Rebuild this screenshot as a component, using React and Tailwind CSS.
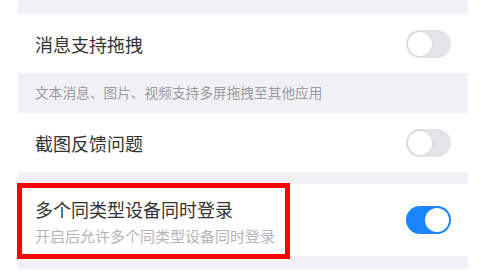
import React from "react";

function Toggle({ on }) {
  return (
    <div
      className={
        "w-[45px] h-[28px] rounded-full p-[2px] flex items-center " +
        (on ? "bg-[#1a84ff] justify-end" : "bg-[#e4e4e8] justify-start")
      }
    >
      <div
        className={
          "w-[24px] h-[24px] rounded-full bg-white " +
          (on ? "" : "shadow-[0_0_0_1px_#d6d6da]")
        }
      />
    </div>
  );
}

export default function App() {
  return (
    <div
      className="w-[500px] h-[280px] bg-white overflow-hidden"
      style={{ fontFamily: '"Noto Sans CJK SC", "Noto Sans", sans-serif' }}
    >
      <div className="ml-[18px] w-[450px] bg-[#f1f1f5] relative">
        {/* top spacer */}
        <div className="h-[14px]" />

        {/* drag messages */}
        <div className="h-[59px] bg-white flex items-center justify-between pl-[17px] pr-[17px]">
          <span className="text-[18px] text-[#333333] leading-none">消息支持拖拽</span>
          <Toggle on={false} />
        </div>
        <div className="h-[40px] flex items-center pl-[17px]">
          <span className="text-[13.7px] text-[#9a9a9e] leading-none">
            文本消息、图片、视频支持多屏拖拽至其他应用
          </span>
        </div>

        {/* screenshot feedback */}
        <div className="h-[59px] bg-white flex items-center justify-between pl-[17px] pr-[17px]">
          <span className="text-[18px] text-[#333333] leading-none">截图反馈问题</span>
          <Toggle on={false} />
        </div>
        <div className="h-[12px]" />

        {/* multi device login */}
        <div className="h-[72px] bg-white flex items-center justify-between pl-[17px] pr-[17px] relative">
          <div className="flex flex-col">
            <span className="text-[18px] text-[#333333] leading-none mt-[2px]">
              多个同类型设备同时登录
            </span>
            <span className="text-[15px] text-[#b4b4b8] leading-none mt-[10px]">
              开启后允许多个同类型设备同时登录
            </span>
          </div>
          <Toggle on={true} />
          <div className="absolute left-[-1px] top-[-1px] w-[273px] h-[76px] border-[5px] border-[#ff0000] pointer-events-none" />
        </div>
        <div className="h-[13px]" />
      </div>
    </div>
  );
}
